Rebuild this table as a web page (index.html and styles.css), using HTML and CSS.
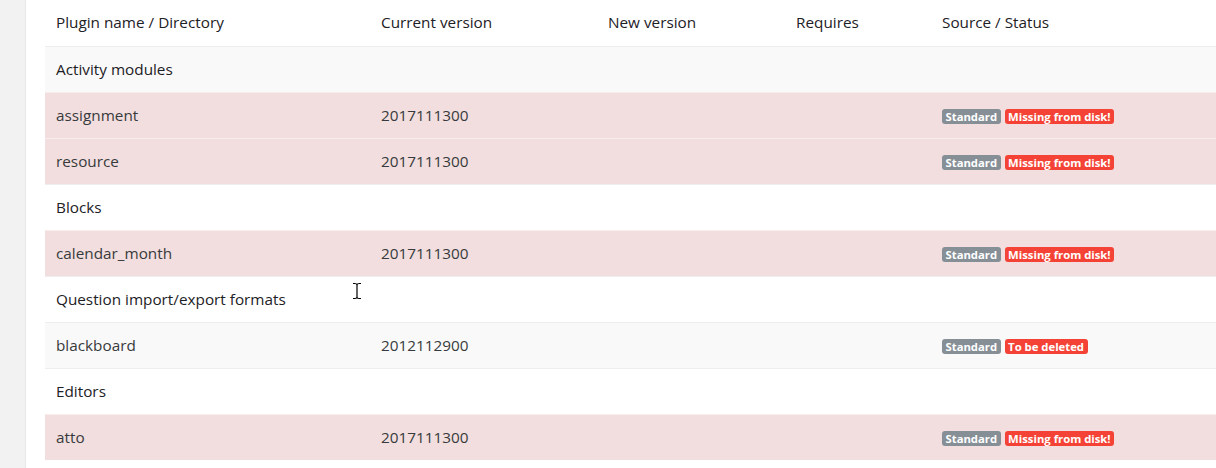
FILE: index.html
```html
<!DOCTYPE html>
<html>
<head>
<meta charset="utf-8">
<link rel="stylesheet" href="styles.css">
</head>
<body>
<div class="page">
  <div class="sidebar"></div>
  <div class="content">
    <table class="plugins">
      <colgroup>
        <col class="c1"><col class="c2"><col class="c3"><col class="c4"><col class="c5">
      </colgroup>
      <thead>
        <tr><th>Plugin name / Directory</th><th>Current version</th><th>New version</th><th>Requires</th><th>Source / Status</th></tr>
      </thead>
      <tbody>
        <tr class="cat striped"><td colspan="5">Activity modules</td></tr>
        <tr class="danger"><td>assignment</td><td>2017111300</td><td></td><td></td><td><span class="badge std">Standard</span> <span class="badge red">Missing from disk!</span></td></tr>
        <tr class="danger"><td>resource</td><td>2017111300</td><td></td><td></td><td><span class="badge std">Standard</span> <span class="badge red">Missing from disk!</span></td></tr>
        <tr class="cat"><td colspan="5">Blocks</td></tr>
        <tr class="danger"><td>calendar_month</td><td>2017111300</td><td></td><td></td><td><span class="badge std">Standard</span> <span class="badge red">Missing from disk!</span></td></tr>
        <tr class="cat"><td colspan="5">Question import/export formats</td></tr>
        <tr class="striped"><td>blackboard</td><td>2012112900</td><td></td><td></td><td><span class="badge std">Standard</span> <span class="badge red">To be deleted</span></td></tr>
        <tr class="cat"><td colspan="5">Editors</td></tr>
        <tr class="danger"><td>atto</td><td>2017111300</td><td></td><td></td><td><span class="badge std">Standard</span> <span class="badge red">Missing from disk!</span></td></tr>
      </tbody>
    </table>
  </div>
</div>
<svg class="cursor" width="10" height="18" viewBox="0 0 10 18"><path d="M1 1.5h2.5M6.5 1.5H9M3 1.5c1.2 0 2 .5 2 1.5v12c0 1-.8 1.5-2 1.5M7 1.5c-1.2 0-2 .5-2 1.5v12c0 1 .8 1.5 2 1.5M1 16.5h2.5M6.5 16.5H9" fill="none" stroke="#000" stroke-width="1.2"/></svg>
</body>
</html>
```

FILE: styles.css
```css
html, body {
  margin: 0;
  padding: 0;
  background: #fff;
  font-family: "Open Sans", "Liberation Sans", sans-serif;
  font-size: 15.3px;
  overflow: hidden;
}
.page {
  display: flex;
  height: 468px;
}
.sidebar {
  width: 25px;
  flex: none;
  background: #f2f2f2;
  border-right: 1px solid #e8e8e8;
}
.content {
  flex: 1;
  padding-left: 19px;
  overflow: hidden;
}
.plugins {
  border-collapse: collapse;
  width: 1180px;
  table-layout: fixed;
}
.c1 { width: 325px; }
.c2 { width: 227px; }
.c3 { width: 188px; }
.c4 { width: 146px; }
.c5 { width: 294px; }
.plugins th {
  text-align: left;
  font-weight: 400;
  color: #1d2125;
  height: 46px;
  padding: 0 11px 2px;
  box-sizing: border-box;
  vertical-align: middle;
}
.plugins td {
  height: 46px;
  box-sizing: border-box;
  padding: 0 11px 1px;
  border-top: 1px solid #eeeeee;
  color: #373a3c;
  vertical-align: middle;
  white-space: nowrap;
}
.plugins tr.cat td { color: #1d2125; }
.plugins tr.striped td { background: #f9f9f9; }
.plugins tr.danger td { background: #f2dede; border-top-color: #f8eded; }
.badge {
  display: inline-block;
  font-size: 11.3px;
  font-weight: 700;
  line-height: 15px;
  padding: 0 3.5px;
  border-radius: 3px;
  color: #fff;
  vertical-align: middle;
}
.badge.std { background: #868e96; }
.badge.red { background: #f44336; }
.cursor {
  position: absolute;
  left: 352px;
  top: 282px;
}
```
